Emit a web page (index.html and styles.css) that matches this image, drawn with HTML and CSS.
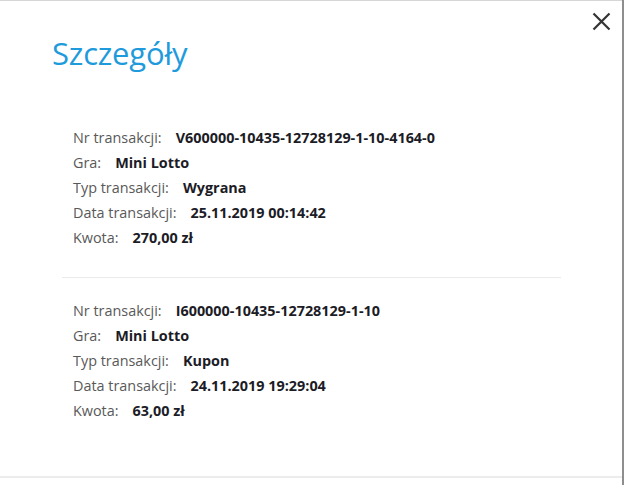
FILE: index.html
```html
<!DOCTYPE html>
<html lang="pl">
<head>
<meta charset="utf-8">
<title>Szczegóły</title>
<link rel="stylesheet" href="styles.css">
</head>
<body>
<div class="page">
<div class="modal">
  <button class="close" aria-label="Zamknij">
    <svg width="19" height="19" viewBox="0 0 19 19"><path d="M1.5 1.5 L17.5 17.5 M17.5 1.5 L1.5 17.5" stroke="#333" stroke-width="2.2" fill="none"/></svg>
  </button>
  <h1 class="title">Szczegóły</h1>
  <div class="details">
    <div class="block">
      <div class="row"><span class="label">Nr transakcji:</span><span class="value">V600000-10435-12728129-1-10-4164-0</span></div>
      <div class="row"><span class="label">Gra:</span><span class="value">Mini Lotto</span></div>
      <div class="row"><span class="label">Typ transakcji:</span><span class="value">Wygrana</span></div>
      <div class="row"><span class="label">Data transakcji:</span><span class="value">25.11.2019 00:14:42</span></div>
      <div class="row"><span class="label">Kwota:</span><span class="value">270,00 zł</span></div>
    </div>
    <div class="divider"></div>
    <div class="block">
      <div class="row"><span class="label">Nr transakcji:</span><span class="value">I600000-10435-12728129-1-10</span></div>
      <div class="row"><span class="label">Gra:</span><span class="value">Mini Lotto</span></div>
      <div class="row"><span class="label">Typ transakcji:</span><span class="value">Kupon</span></div>
      <div class="row"><span class="label">Data transakcji:</span><span class="value">24.11.2019 19:29:04</span></div>
      <div class="row"><span class="label">Kwota:</span><span class="value">63,00 zł</span></div>
    </div>
  </div>
</div>
</div>
</body>
</html>
```

FILE: styles.css
```css
* { box-sizing: border-box; }
html, body { margin: 0; padding: 0; background: #fff; }
body { font-family: "Open Sans", "Noto Sans", sans-serif; }
.page {
  width: 624px;
  height: 485px;
  border-right: 2px solid #8e8e8e;
}
.modal {
  position: relative;
  height: 478px;
  border-top: 1px solid #d6d6d6;
  border-bottom: 2px solid #ececec;
  padding: 32px 0 0 52px;
  background: #fff;
}
.close {
  position: absolute;
  top: 11px;
  right: 11px;
  width: 19px;
  height: 19px;
  padding: 0;
  border: 0;
  background: none;
  display: flex;
}
.title {
  margin: 0;
  font-size: 31px;
  line-height: 40px;
  font-weight: 400;
  color: #1f9bdc;
  letter-spacing: -0.2px;
}
.details {
  margin: 52px 0 0 10px;
  width: 499px;
}
.block { padding-left: 11px; }
.row {
  display: flex;
  gap: 14px;
  height: 25px;
  line-height: 25px;
  font-size: 14.4px;
  white-space: nowrap;
}
.label { color: #595959; }
.value { color: #1c1c26; font-weight: 700; }
.divider {
  height: 1px;
  background: #ebebeb;
  margin: 27px 0 20px;
}
```
